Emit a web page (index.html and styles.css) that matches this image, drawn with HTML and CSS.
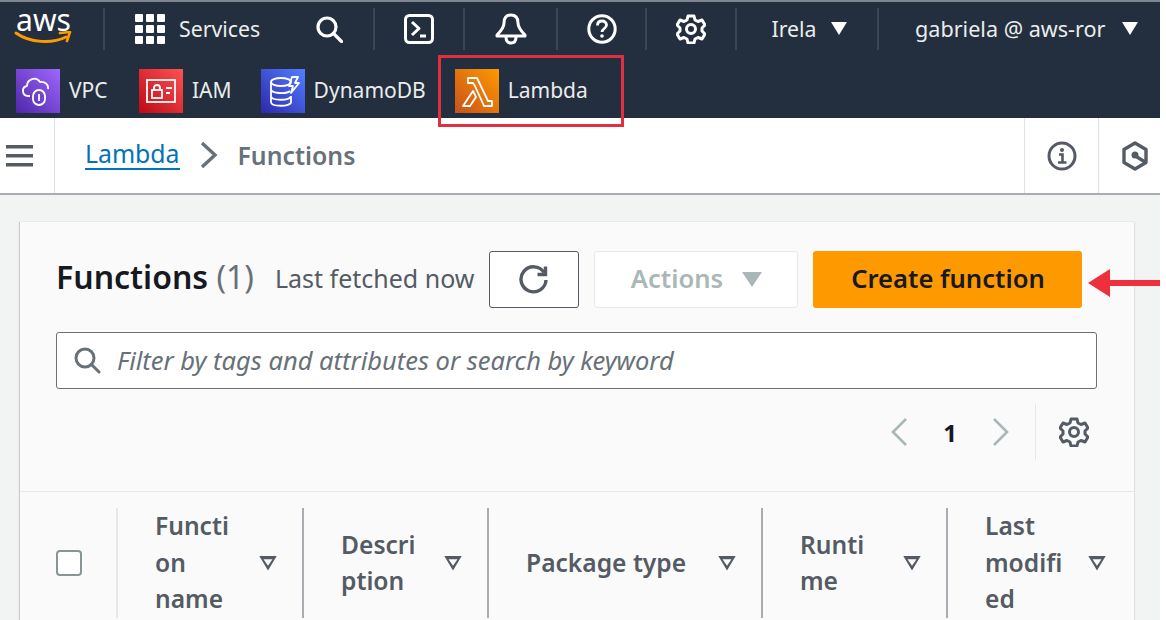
FILE: index.html
```html
<!DOCTYPE html>
<html lang="en">
<head>
  <meta charset="UTF-8">
  <title>Functions - Lambda</title>
  <link rel="stylesheet" href="styles.css">
</head>
<body>
  <div class="page">
    <nav class="topnav">
      <div class="nav-row">
        <div class="cell cell-logo">
          <div class="logo">
            <span class="logo-text">aws</span>
            <svg class="logo-smile" viewBox="0 0 60 14" width="60" height="14"><path d="M2 2c14 10 36 11 50 4" fill="none" stroke="#f90" stroke-width="3" stroke-linecap="round"/><path d="M46 2l10-1-3 9" fill="none" stroke="#f90" stroke-width="2.6" stroke-linejoin="round" stroke-linecap="round"/></svg>
          </div>
        </div>
        <div class="cell cell-services">
          <svg viewBox="0 0 30 30" width="30" height="30" fill="#fff"><rect x="0" y="0" width="8" height="8" rx="1"/><rect x="11" y="0" width="8" height="8" rx="1"/><rect x="22" y="0" width="8" height="8" rx="1"/><rect x="0" y="11" width="8" height="8" rx="1"/><rect x="11" y="11" width="8" height="8" rx="1"/><rect x="22" y="11" width="8" height="8" rx="1"/><rect x="0" y="22" width="8" height="8" rx="1"/><rect x="11" y="22" width="8" height="8" rx="1"/><rect x="22" y="22" width="8" height="8" rx="1"/></svg>
          <span>Services</span>
        </div>
        <div class="cell cell-search">
          <svg viewBox="0 0 28 28" width="28" height="28" fill="none" stroke="#fff" stroke-width="3.2"><circle cx="12" cy="12" r="9"/><path d="M18.5 18.5l8 8" stroke-linecap="round"/></svg>
        </div>
        <div class="cell cell-shell">
          <svg viewBox="0 0 30 30" width="30" height="30" fill="none" stroke="#fff" stroke-width="3"><rect x="1.5" y="1.5" width="27" height="27" rx="4"/><path d="M8 8l7 6.5-7 6.5" stroke-linejoin="round"/><path d="M16 22h6"/></svg>
        </div>
        <div class="cell cell-bell">
          <svg viewBox="0 0 32 32" width="32" height="32" fill="none" stroke="#fff" stroke-width="3" stroke-linejoin="round"><path d="M16 2c-5 0-7 3-7 8 0 4-3 8-7 12v1h28v-1c-4-4-7-8-7-12 0-5-2-8-7-8z"/><path d="M11 24c0 4 2 6 5 6s5-2 5-6"/></svg>
        </div>
        <div class="cell cell-help">
          <svg viewBox="0 0 30 30" width="30" height="30" fill="none" stroke="#fff" stroke-width="3"><circle cx="15" cy="15" r="13.2"/><path d="M10.5 11.5c0-3 2-4.5 4.5-4.5s4.5 1.5 4.5 4c0 3.5-4.5 3.5-4.5 7" stroke-width="2.8"/><circle cx="15" cy="22" r="1.8" fill="#fff" stroke="none"/></svg>
        </div>
        <div class="cell cell-gear">
          <svg class="gear" viewBox="0 0 30 30" width="30" height="30"><use href="#gear-shape"/></svg>
        </div>
        <div class="cell cell-region">
          <span>Irela</span>
          <i class="caret"></i>
        </div>
        <div class="cell cell-user">
          <span>gabriela @ aws-ror</span>
          <i class="caret"></i>
        </div>
      </div>

      <div class="fav-row">
        <div class="fav">
          <span class="fav-icon fav-vpc">
            <svg viewBox="0 0 44 44" width="44" height="44" fill="none" stroke="#fff" stroke-width="1.8" stroke-linejoin="round"><path d="M14 27h-2c-6 0-7-9-1-10 0-7 9-10 13-4 5-1 9 3 8 7"/><rect x="17" y="21" width="12" height="15" rx="6"/><path d="M23 25v7"/></svg>
          </span>
          <span class="fav-name name-vpc">VPC</span>
        </div>
        <div class="fav">
          <span class="fav-icon fav-iam">
            <svg viewBox="0 0 44 44" width="44" height="44" fill="none" stroke="#fff" stroke-width="1.8"><rect x="8" y="11" width="28" height="22"/><rect x="13" y="21" width="10" height="8"/><path d="M15 21v-2c0-4 6-4 6 0v2M27 19h6M27 24h4"/></svg>
          </span>
          <span class="fav-name name-iam">IAM</span>
        </div>
        <div class="fav">
          <span class="fav-icon fav-dynamo">
            <svg viewBox="0 0 44 44" width="44" height="44" fill="none" stroke="#fff" stroke-width="1.8" stroke-linejoin="round"><ellipse cx="20" cy="13" rx="10" ry="4"/><path d="M10 13v20c0 5 20 5 20 0v-6M10 20c0 5 16 5 19 2M10 27c0 5 20 5 20 0"/><path d="M31 8h6l-3 6h4l-8 10 2-7h-4z"/></svg>
          </span>
          <span class="fav-name">DynamoDB</span>
        </div>
        <div class="fav">
          <span class="fav-icon fav-lambda">
            <svg viewBox="0 0 44 44" width="44" height="44" fill="none" stroke="#fff" stroke-width="1.8" stroke-linejoin="round"><path d="M13 9h9l11 23h4v5h-8L20 17l-2-3h-5zM18 22l3 6-6 9H8z"/></svg>
          </span>
          <span class="fav-name">Lambda</span>
        </div>
      </div>
    </nav>

    <div class="crumbbar">
      <div class="crumb-menu">
        <svg viewBox="0 0 28 22" width="28" height="22" fill="#545b64"><rect y="0" width="27" height="3.5"/><rect y="9" width="27" height="3.5"/><rect y="18" width="27" height="3.5"/></svg>
      </div>
      <div class="crumbs">
        <a class="crumb-link">Lambda</a>
        <svg viewBox="0 0 18 28" width="18" height="28" fill="none" stroke="#687078" stroke-width="3.4"><path d="M2 2l13 12L2 26"/></svg>
        <span class="crumb-current">Functions</span>
      </div>
      <div class="crumb-tool">
        <svg viewBox="0 0 30 30" width="30" height="30" fill="none" stroke="#545b64" stroke-width="3"><circle cx="15" cy="15" r="13"/><circle cx="15" cy="9" r="2" fill="#545b64" stroke="none"/><path d="M12 13.5h3.5V21M11 21.5h8.5" stroke-width="2.6"/></svg>
      </div>
      <div class="crumb-tool crumb-tool-last">
        <svg viewBox="0 0 28 30" width="28" height="30" fill="none" stroke="#545b64" stroke-width="3.4" stroke-linejoin="round"><path d="M14 2l11 6.5v13L14 28 3 21.5v-13z"/><circle cx="14" cy="14" r="3.5" fill="#545b64" stroke="none"/><path d="M16 16l8 5"/></svg>
      </div>
    </div>

    <main class="content">
      <section class="card">
        <div class="card-head">
          <h1 class="title">Functions <span class="count">(1)</span></h1>
          <span class="fetched">Last fetched now</span>
          <button class="btn btn-refresh">
            <svg viewBox="0 0 32 32" width="32" height="32" fill="none" stroke="#545b64" stroke-width="3.4"><path d="M26 8.5A12.5 12.5 0 1 0 28 16"/><path d="M27.5 2.5v8h-8"/></svg>
          </button>
          <button class="btn btn-actions">Actions <i class="caret caret-muted"></i></button>
          <button class="btn btn-create">Create function</button>
        </div>

        <div class="filter">
          <svg viewBox="0 0 28 28" width="28" height="28" fill="none" stroke="#687078" stroke-width="3"><circle cx="12" cy="12" r="9"/><path d="M18.5 18.5l7.5 7.5" stroke-linecap="round"/></svg>
          <span>Filter by tags and attributes or search by keyword</span>
        </div>

        <div class="pager">
          <svg viewBox="0 0 18 30" width="18" height="30" fill="none" stroke="#aab7b8" stroke-width="2.6"><path d="M16 2L3 15l13 13"/></svg>
          <span class="page-num">1</span>
          <svg viewBox="0 0 18 30" width="18" height="30" fill="none" stroke="#aab7b8" stroke-width="2.6"><path d="M2 2l13 13L2 28"/></svg>
          <div class="pager-settings">
            <svg class="gear gear-dark" viewBox="0 0 30 30" width="30" height="30"><use href="#gear-shape"/></svg>
          </div>
        </div>

        <div class="table-head">
          <div class="th th-check"><i class="checkbox"></i></div>
          <div class="th th-first"><span>Functi<br>on<br>name</span><i class="sort"></i></div>
          <div class="th"><span>Descri<br>ption</span><i class="sort"></i></div>
          <div class="th"><span>Package type</span><i class="sort"></i></div>
          <div class="th"><span>Runti<br>me</span><i class="sort"></i></div>
          <div class="th"><span>Last<br>modifi<br>ed</span><i class="sort"></i></div>
        </div>
      </section>
    </main>

    <!-- annotations drawn on top of the screenshot -->
    <div class="mark-box"></div>
    <svg class="mark-arrow" viewBox="0 0 72 28" width="72" height="28"><path d="M72 11H22V0L0 14l22 14V17h50z" fill="#ee2f3c"/></svg>
  </div>

  <svg class="defs" width="0" height="0">
    <defs>
      <g id="gear-shape" fill="none" stroke="currentColor" stroke-width="3" stroke-linejoin="round">
        <path d="M12 2h6l1 4 3 1.5 4-1.5 3 5-3 3v3l3 3-3 5-4-1.5-3 1.5-1 4h-6l-1-4-3-1.5-4 1.5-3-5 3-3v-3l-3-3 3-5 4 1.5 3-1.5z"/>
        <circle cx="15" cy="15" r="4.5"/>
      </g>
    </defs>
  </svg>
</body>
</html>
```

FILE: styles.css
```css
html, body {
  margin: 0;
  height: 100%;
  overflow: hidden;
  background: #fff;
}
body {
  font-family: "Noto Sans", "Open Sans", sans-serif;
  font-size: 21.3px;
}
.page {
  position: relative;
  width: 1160px;
  height: 620px;
  overflow: hidden;
}
.defs {
  position: absolute;
}

/* top bar */
.topnav {
  background: #232f3e;
  border-top: 2px solid #7d8590;
  height: 116px;
  color: #eaeded;
}
.nav-row {
  display: flex;
  height: 54px;
  padding-top: 6px;
  box-sizing: border-box;
}
.cell {
  display: flex;
  align-items: center;
  justify-content: center;
  height: 42px;
  padding-bottom: 1px;
  border-right: 2px solid #3b4654;
  box-sizing: border-box;
}
.cell-logo { width: 105px; padding-right: 16px; }
.cell-services { width: 192px; border-right: 0; gap: 14px; justify-content: flex-start; padding-left: 30px; }
.cell-search { width: 78px; padding-right: 12px; }
.cell-shell { width: 90px; }
.cell-bell { width: 93px; }
.cell-help { width: 89px; }
.cell-gear { width: 90px; }
.cell-region { width: 142px; gap: 14px; padding-left: 4px; }
.cell-user { width: 281px; gap: 16px; border-right: 0; justify-content: flex-start; padding-left: 36px; font-size: 21.6px; }
.logo {
  display: flex;
  flex-direction: column;
  align-items: center;
  margin-top: -5px;
}
.logo-text {
  font-size: 30px;
  line-height: 26px;
  color: #fff;
}
.logo-smile {
  margin-top: -2px;
}
.caret {
  display: inline-block;
  width: 0;
  height: 0;
  border-left: 8px solid transparent;
  border-right: 8px solid transparent;
  border-top: 13px solid #fff;
}
.gear {
  color: #fff;
}
.gear-dark {
  color: #545b64;
}

/* favourites */
.fav-row {
  display: flex;
  gap: 29px;
  padding: 13px 0 0 16px;
  font-size: 21px;
}
.fav {
  display: flex;
  align-items: center;
  gap: 9px;
}
.fav-name {
  padding-bottom: 2px;
}
.name-vpc { min-width: 41px; }
.name-iam { min-width: 39px; }
.fav-icon {
  display: block;
  width: 44px;
  height: 44px;
}
.fav-vpc { background: linear-gradient(45deg, #4d27a8, #a166ff); }
.fav-iam { background: linear-gradient(45deg, #bd0816, #ff5252); }
.fav-dynamo { background: linear-gradient(45deg, #2e27ad, #527fff); }
.fav-lambda { background: linear-gradient(45deg, #c8511b, #ff9900); }

/* breadcrumbs */
.crumbbar {
  display: flex;
  height: 75px;
  background: #fff;
  border-bottom: 2px solid #a9adb1;
}
.crumb-menu {
  display: flex;
  align-items: center;
  justify-content: center;
  width: 55px;
  border-right: 1px solid #dfe2e2;
  box-sizing: border-box;
  padding-right: 15px;
}
.crumbs {
  flex: 1;
  display: flex;
  align-items: center;
  gap: 20px;
  padding: 0 0 2px 30px;
  font-size: 24.8px;
}
.crumb-link {
  color: #0073bb;
  border-bottom: 2px solid #0073bb;
  line-height: 29px;
}
.crumb-current {
  color: #687078;
  font-weight: 600;
}
.crumb-tool {
  display: flex;
  align-items: center;
  justify-content: center;
  width: 74px;
  border-left: 1px solid #dfe2e2;
  box-sizing: border-box;
}
.crumb-tool-last {
  width: 62px;
  padding-left: 10px;
}

/* content */
.content {
  height: 427px;
  background: #f2f3f3;
  padding: 27px 26px 0 20px;
  box-sizing: border-box;
}
.card {
  background: #fafafa;
  height: 420px;
  box-shadow: -1px 0 1px #c8cccc, 1px 0 1px #dfe2e2;
}
.card-head {
  display: flex;
  align-items: center;
  height: 57px;
  padding: 29px 0 0 36px;
}
.title {
  margin: 0;
  padding-bottom: 6px;
  font-size: 32px;
  font-weight: 600;
  color: #16191f;
}
.count {
  font-weight: 400;
  color: #687078;
}
.fetched {
  margin-left: 21px;
  padding-bottom: 3px;
  font-size: 25px;
  color: #545b64;
}
.btn {
  display: flex;
  align-items: center;
  justify-content: center;
  height: 57px;
  padding: 0 0 3px;
  border-radius: 3px;
  font-family: inherit;
  font-size: 25.6px;
  font-weight: 600;
  box-sizing: border-box;
}
.btn-refresh {
  width: 90px;
  margin-left: 15px;
  padding: 0;
  background: #fff;
  border: 1px solid #545b64;
}
.btn-actions {
  width: 204px;
  margin-left: 15px;
  gap: 19px;
  background: #fff;
  border: 1px solid #e6e9e9;
  color: #aab7b8;
}
.caret-muted {
  margin-top: 3px;
  border-top-color: #aab7b8;
  border-left-width: 10px;
  border-right-width: 10px;
  border-top-width: 15px;
}
.btn-create {
  width: 269px;
  margin-left: 15px;
  background: #ff9900;
  border: 0;
  color: #16191f;
}
.filter {
  display: flex;
  align-items: center;
  gap: 16px;
  height: 57px;
  width: 1041px;
  margin: 24px 0 0 36px;
  padding: 0 0 2px 16px;
  background: #fff;
  border: 1px solid #687078;
  border-radius: 3px;
  box-sizing: border-box;
  font-size: 25.5px;
  font-style: italic;
  color: #687078;
}
.pager {
  display: flex;
  align-items: center;
  justify-content: flex-end;
  height: 56px;
  margin-top: 15px;
  padding-right: 45px;
}
.page-num {
  width: 84px;
  text-align: center;
  font-size: 24px;
  font-weight: 700;
  color: #16191f;
}
.pager-settings {
  display: flex;
  align-items: center;
  height: 56px;
  margin-left: 25px;
  padding-left: 23px;
  border-left: 1px solid #e6e9e9;
}
.table-head {
  display: grid;
  grid-template-columns: 96px 186px 185px 274px 185px 185px;
  height: 130px;
  margin-top: 31px;
  padding-top: 16px;
  border-top: 1px solid #e6e9e9;
  box-sizing: border-box;
}
.th {
  display: flex;
  align-items: center;
  justify-content: space-between;
  height: 110px;
  padding: 0 25px 0 37px;
  border-left: 2px solid #a9adb1;
  box-sizing: border-box;
  font-size: 24.6px;
  font-weight: 600;
  line-height: 36.5px;
  color: #545b64;
}
.th-check {
  padding-left: 36px;
  border-left: 0;
}
.th-first {
  border-left-color: #e6e9e9;
}
.checkbox {
  display: block;
  width: 26px;
  height: 26px;
  background: #fff;
  border: 2px solid #879596;
  border-radius: 4px;
  box-sizing: border-box;
}
.sort {
  display: block;
  flex: none;
  width: 18px;
  height: 15px;
  background: #545b64;
  clip-path: polygon(0 0, 100% 0, 50% 100%, 50% 68%, 75% 25%, 25% 25%, 50% 68%, 50% 100%);
}

/* annotations */
.mark-box {
  position: absolute;
  left: 438px;
  top: 55px;
  width: 186px;
  height: 72px;
  border: 3px solid #e0303f;
  box-sizing: border-box;
}
.mark-arrow {
  position: absolute;
  left: 1088px;
  top: 269px;
}
```
